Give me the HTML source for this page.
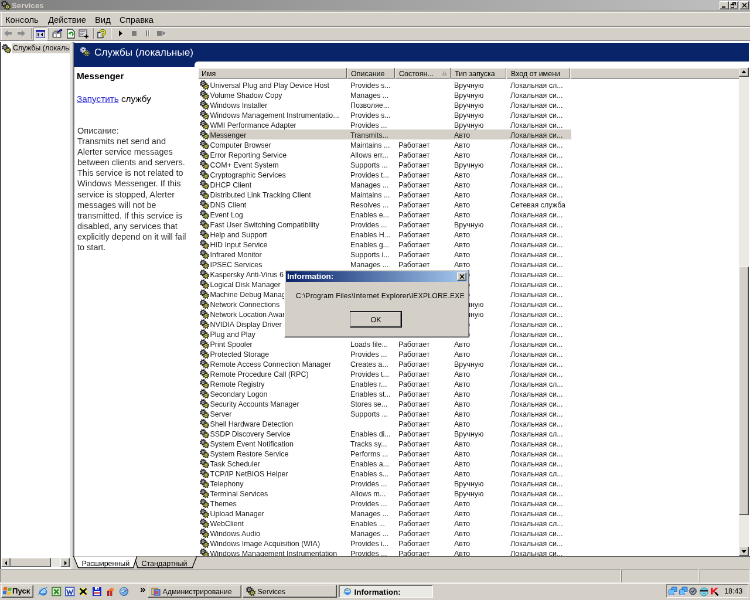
<!DOCTYPE html><html><head><meta charset='utf-8'><style>
*{margin:0;padding:0;box-sizing:border-box}
html,body{width:750px;height:600px;overflow:hidden;background:#d4d0c8}
#root{will-change:transform;position:absolute;left:0;top:0;width:1280px;height:1024px;transform:scale(0.5859375);transform-origin:0 0;background:#d4d0c8;overflow:hidden;font-family:"Liberation Sans",sans-serif;font-size:12.5px;color:#000}
.a{position:absolute}
.t{position:absolute;white-space:nowrap;line-height:17px}
.lt{color:#1a1a1a}
.up{border-style:solid;border-width:1px;border-color:#fff #404040 #404040 #fff;box-shadow:inset -1px -1px 0 #808080, inset 1px 1px 0 #d4d0c8;background:#d4d0c8}
.dn{border-style:solid;border-width:1px;border-color:#808080 #fff #fff #808080;}
.row{position:absolute;left:339px;height:17px;width:936px}
.row span{position:absolute;top:0;white-space:nowrap;line-height:17px}
</style></head><body><div id='root'><svg width="0" height="0" style="position:absolute"><defs>
<g id="gear">
 <circle cx="5.6" cy="5.6" r="4.9" fill="none" stroke="#1a1a1a" stroke-width="1.8" stroke-dasharray="1.9 1.95"/>
 <circle cx="5.6" cy="5.6" r="4.3" fill="#1e1e1e"/>
 <circle cx="5.6" cy="5.6" r="2.7" fill="#b4b4b8"/>
 <circle cx="5.6" cy="5.6" r="1.1" fill="#30304a"/>
 <circle cx="10.6" cy="10.8" r="4.9" fill="none" stroke="#2e2e0c" stroke-width="1.8" stroke-dasharray="1.9 1.95"/>
 <circle cx="10.6" cy="10.8" r="4.3" fill="#2e2e0c"/>
 <circle cx="10.6" cy="10.8" r="2.8" fill="#c4c468"/>
 <circle cx="10.6" cy="10.8" r="1.1" fill="#4a4a18"/>
</g>
</defs></svg><div class="a" style="left:0;top:0;width:1280px;height:17px;background:linear-gradient(90deg,#808080,#c0c0c0)"></div><svg class="a" style="left:2px;top:1px" width="16" height="16"><use href="#gear"/></svg><div class="t" style="left:20px;top:0.5px;line-height:18px;font-weight:bold;font-size:13.3px;color:#d4d0c8">Services</div><div class="a up" style="left:1228px;top:2px;width:16px;height:14px"><div class="a" style="left:3px;top:8px;width:6px;height:2px;background:#000"></div></div><div class="a up" style="left:1244px;top:2px;width:16px;height:14px"><div class="a" style="left:5px;top:1px;width:6px;height:5px;border:1px solid #000;border-top-width:2px"></div><div class="a" style="left:2px;top:4px;width:6px;height:6px;border:1px solid #000;border-top-width:2px;background:#d4d0c8"></div></div><div class="a up" style="left:1262px;top:2px;width:16px;height:14px"><svg class="a" style="left:3px;top:2px" width="9" height="8"><path d="M1 0.5 L8 7.5 M8 0.5 L1 7.5" stroke="#000" stroke-width="1.6"/></svg></div><div class="a" style="left:0;top:17px;width:1280px;height:3px;background:#aaa9a5"></div><div class="a" style="left:0;top:20px;width:1280px;height:2px;background:#f0eee8"></div><div class="a" style="left:0;top:44px;width:1280px;height:2px;background:#8a8a8a"></div><div class="a" style="left:0;top:46px;width:1280px;height:2px;background:#f4f2ee"></div><div class="t" style="left:9px;top:24.5px;font-size:14.8px;line-height:18px">Консоль</div><div class="t" style="left:82px;top:24.5px;font-size:14.8px;line-height:18px">Действие</div><div class="t" style="left:162px;top:24.5px;font-size:14.8px;line-height:18px">Вид</div><div class="t" style="left:204px;top:24.5px;font-size:14.8px;line-height:18px">Справка</div><div class="a" style="left:0;top:68px;width:1280px;height:2px;background:#8a8a8a"></div><div class="a" style="left:0;top:70px;width:1280px;height:2px;background:#fff"></div><div class="a" style="left:0;top:72px;width:1280px;height:1px;background:#404040"></div><div class="a" style="left:0;top:22px;width:1.2px;height:22px;background:#b0b0b0"></div><div class="a" style="left:1.2px;top:22px;width:1.5px;height:22px;background:#f8f8f8"></div><div class="a" style="left:0;top:48px;width:1.2px;height:20px;background:#b0b0b0"></div><div class="a" style="left:1.2px;top:48px;width:1.5px;height:20px;background:#f8f8f8"></div><svg class="a" style="left:6px;top:50px" width="16" height="14"><path d="M1 7 L7 1.5 L7 5 L14 5 L14 9 L7 9 L7 12.5 Z" fill="#8c8c8c"/></svg><svg class="a" style="left:28px;top:50px" width="16" height="14"><path d="M15 7 L9 1.5 L9 5 L2 5 L2 9 L9 9 L9 12.5 Z" fill="#8c8c8c"/></svg><div class="a" style="left:53px;top:48px;width:1px;height:19px;background:#808080"></div><div class="a" style="left:54px;top:48px;width:1px;height:19px;background:#fff"></div><div class="a" style="left:57px;top:47px;width:24px;height:22px;border:1px solid;border-color:#808080 #fff #fff #808080;background:#eceae4"></div><svg class="a" style="left:61px;top:51px" width="16" height="14"><rect x="0.5" y="0.5" width="15" height="13" fill="#d8d8f0" stroke="#2020a0"/><rect x="0.5" y="0.5" width="15" height="3" fill="#2020a0"/><rect x="3" y="5" width="3" height="6" fill="#404040"/><path d="M12 5 L12 11 L8.5 8 Z" fill="#000"/></svg><div class="a" style="left:82px;top:48px;width:1px;height:19px;background:#808080"></div><div class="a" style="left:83px;top:48px;width:1px;height:19px;background:#fff"></div><svg class="a" style="left:89px;top:50px" width="18" height="16"><path d="M1 6 L5 3 L15 3 L15 14 L1 14 Z" fill="#a0a0a0" stroke="#404040"/><rect x="3" y="8" width="3" height="5" fill="#fff"/><rect x="8" y="8" width="5" height="5" fill="#fff"/><path d="M9 6 L14 1 L16 1 L16 3" stroke="#000080" stroke-width="2" fill="none"/></svg><svg class="a" style="left:114px;top:49px" width="15" height="18"><path d="M1 1 L9 1 L13 5 L13 16 L1 16 Z" fill="#f4fff4" stroke="#303030" stroke-width="1.3"/><path d="M4.5 9 A3 3 0 1 1 9 11.5" stroke="#209020" stroke-width="2.2" fill="none"/><path d="M3 7 L6 11 L7 7 Z" fill="#209020"/></svg><svg class="a" style="left:134px;top:50px" width="18" height="16"><rect x="1" y="1" width="13" height="11" fill="#d8d8e0" stroke="#505050" stroke-width="1.3"/><path d="M3 4 L11 4 M3 6.5 L9 6.5 M3 9 L8 9" stroke="#505050" stroke-width="1.2"/><path d="M10 12 L17 12 M13.5 9 L13.5 15.5" stroke="#000" stroke-width="2"/></svg><div class="a" style="left:159px;top:48px;width:1px;height:19px;background:#808080"></div><div class="a" style="left:160px;top:48px;width:1px;height:19px;background:#fff"></div><svg class="a" style="left:165px;top:49px" width="18" height="18"><path d="M2 6.5 L6 6.5 L6 15.5 L2 15.5 Z" fill="#f4f4ff"/><path d="M6.5 6.5 L2 6.5 L2 15.5 L10 15.5" fill="none" stroke="#303038" stroke-width="1.6"/><path d="M6.3 6 A3.8 3.6 0 1 1 11.6 9.6 L10.6 10.6 L10.6 12" stroke="#303010" stroke-width="3.6" fill="none"/><path d="M6.3 6 A3.8 3.6 0 1 1 11.6 9.6 L10.6 10.6 L10.6 12" stroke="#e8f010" stroke-width="2" fill="none"/><rect x="9.2" y="13.2" width="3" height="2.6" fill="#4a6a10"/></svg><div class="a" style="left:189px;top:48px;width:1px;height:19px;background:#808080"></div><div class="a" style="left:190px;top:48px;width:1px;height:19px;background:#fff"></div><svg class="a" style="left:201px;top:51px" width="10" height="12"><path d="M2 1 L8 6 L2 11 Z" fill="#000"/></svg><svg class="a" style="left:224px;top:52px" width="10" height="10"><rect x="1" y="1" width="8" height="8" fill="#7c7c7c"/></svg><svg class="a" style="left:247px;top:51px" width="10" height="12"><rect x="2" y="1" width="2.5" height="10" fill="#7c7c7c"/><rect x="5.5" y="1" width="2.5" height="10" fill="#7c7c7c"/><path d="M4.5 1 L4.5 11 M8 1 L8 11" stroke="#fff" stroke-width="1"/></svg><svg class="a" style="left:267px;top:51px" width="18" height="12"><rect x="1" y="2" width="8" height="8" fill="#7c7c7c"/><path d="M10.5 2 L16 6 L10.5 10 Z" fill="#7c7c7c"/><path d="M11 10.5 L16.5 6.5" stroke="#fff" stroke-width="1"/></svg><div class="a" style="left:0;top:72px;width:121px;height:898px;background:#fff;border-left:2px solid #505050"></div><svg class="a" style="left:3px;top:75px" width="16" height="16"><use href="#gear"/></svg><div class="a" style="left:20px;top:74px;width:99px;height:17px;background:#d4d0c8"></div><div class="t" style="left:22px;top:74px;width:97px;overflow:hidden">Службы (локальные)</div><div class="a" style="left:2px;top:952px;width:117px;height:16px;background:#e6e4df"></div><div class="a up" style="left:2px;top:952px;width:16px;height:16px"><svg class="a" style="left:4px;top:4px" width="6" height="8"><path d="M5 0 L5 8 L1 4 Z" fill="#000"/></svg></div><div class="a up" style="left:18px;top:952px;width:69px;height:16px"></div><div class="a up" style="left:103px;top:952px;width:16px;height:16px"><svg class="a" style="left:5px;top:4px" width="6" height="8"><path d="M1 0 L1 8 L5 4 Z" fill="#000"/></svg></div><div class="a" style="left:119px;top:72px;width:5px;height:898px;background:#e2e0dc"></div><div class="a" style="left:124px;top:72px;width:3px;height:898px;background:#7a7a7a"></div><div class="a" style="left:127px;top:72px;width:1153px;height:878px;background:#fff"></div><div class="a" style="left:126px;top:73px;width:1152px;height:41px;background:#0a246a"></div><div class="a" style="left:332px;top:105px;width:946px;height:12px;background:#fff;border-top-left-radius:6px"></div><svg class="a" style="left:136px;top:79px" width="18" height="18"><circle cx="6" cy="6" r="4.4" fill="none" stroke="#e8e8f4" stroke-width="1.8" stroke-dasharray="1.7 1.75"/><circle cx="6" cy="6" r="3.6" fill="#dcdcec"/><circle cx="6" cy="6" r="1.3" fill="#1a2a6a"/><circle cx="11.5" cy="11.5" r="4.4" fill="none" stroke="#c8c850" stroke-width="1.8" stroke-dasharray="1.7 1.75"/><circle cx="11.5" cy="11.5" r="3.6" fill="#2a2a10"/><circle cx="11.5" cy="11.5" r="2.4" fill="#d0d060"/><circle cx="11.5" cy="11.5" r="1" fill="#2a2a10"/></svg><div class="t" style="left:161px;top:76px;font-size:17.2px;line-height:26px;color:#fff">Службы (локальные)</div><div class="t" style="left:131px;top:120px;font-size:15.4px;font-weight:bold;line-height:20px">Messenger</div><div class="t" style="left:131px;top:158.5px;font-size:15.3px;line-height:20px"><span style="color:#2020d0;text-decoration:underline">Запустить</span> службу</div><div class="a" style="left:132px;top:214px;font-size:14.5px;line-height:18.1px;color:#2c2c2c"><div style="white-space:nowrap;height:18.1px">Описание:</div><div style="white-space:nowrap;height:18.1px">Transmits net send and</div><div style="white-space:nowrap;height:18.1px">Alerter service messages</div><div style="white-space:nowrap;height:18.1px">between clients and servers.</div><div style="white-space:nowrap;height:18.1px">This service is not related to</div><div style="white-space:nowrap;height:18.1px">Windows Messenger. If this</div><div style="white-space:nowrap;height:18.1px">service is stopped, Alerter</div><div style="white-space:nowrap;height:18.1px">messages will not be</div><div style="white-space:nowrap;height:18.1px">transmitted. If this service is</div><div style="white-space:nowrap;height:18.1px">disabled, any services that</div><div style="white-space:nowrap;height:18.1px">explicitly depend on it will fail</div><div style="white-space:nowrap;height:18.1px">to start.</div></div><div class="a" style="left:339px;top:116px;width:922px;height:18px;background:#d4d0c8;border-bottom:1.7px solid #404040;box-shadow:inset 0 1px 0 #fff"></div><div class="a" style="left:590.5px;top:116px;width:1.6px;height:18px;background:#5a5a5a"></div><div class="a" style="left:592.1px;top:116px;width:1px;height:18px;background:#f4f4f4"></div><div class="a" style="left:672.5px;top:116px;width:1.6px;height:18px;background:#5a5a5a"></div><div class="a" style="left:674.1px;top:116px;width:1px;height:18px;background:#f4f4f4"></div><div class="a" style="left:767.5px;top:116px;width:1.6px;height:18px;background:#5a5a5a"></div><div class="a" style="left:769.1px;top:116px;width:1px;height:18px;background:#f4f4f4"></div><div class="a" style="left:862.5px;top:116px;width:1.6px;height:18px;background:#5a5a5a"></div><div class="a" style="left:864.1px;top:116px;width:1px;height:18px;background:#f4f4f4"></div><div class="a" style="left:971.5px;top:116px;width:1.6px;height:18px;background:#5a5a5a"></div><div class="a" style="left:973.1px;top:116px;width:1px;height:18px;background:#f4f4f4"></div><div class="t" style="left:344px;top:117.7px;line-height:17px">Имя</div><div class="t" style="left:599px;top:117.7px;line-height:17px">Описание</div><div class="t" style="left:681px;top:117.7px;line-height:17px">Состоян...</div><div class="t" style="left:776px;top:117.7px;line-height:17px">Тип запуска</div><div class="t" style="left:872px;top:117.7px;line-height:17px">Вход от имени</div><svg class="a" style="left:754px;top:121px" width="9" height="8"><path d="M4.5 1 L8 7 L1 7 Z" fill="none" stroke="#808080" stroke-width="1"/></svg><svg class="a" style="left:341px;top:137px" width="16" height="16"><use href="#gear"/></svg><div class="t lt" style="left:358.5px;top:138px">Universal Plug and Play Device Host</div><div class="t lt" style="left:598px;top:138px">Provides s...</div><div class="t lt" style="left:775px;top:138px">Вручную</div><div class="t lt" style="left:871px;top:138px">Локальная сл...</div><svg class="a" style="left:341px;top:154px" width="16" height="16"><use href="#gear"/></svg><div class="t lt" style="left:358.5px;top:155px">Volume Shadow Copy</div><div class="t lt" style="left:598px;top:155px">Manages ...</div><div class="t lt" style="left:775px;top:155px">Вручную</div><div class="t lt" style="left:871px;top:155px">Локальная си...</div><svg class="a" style="left:341px;top:171px" width="16" height="16"><use href="#gear"/></svg><div class="t lt" style="left:358.5px;top:172px">Windows Installer</div><div class="t lt" style="left:598px;top:172px">Позволяе...</div><div class="t lt" style="left:775px;top:172px">Вручную</div><div class="t lt" style="left:871px;top:172px">Локальная си...</div><svg class="a" style="left:341px;top:188px" width="16" height="16"><use href="#gear"/></svg><div class="t lt" style="left:358.5px;top:189px">Windows Management Instrumentatio...</div><div class="t lt" style="left:598px;top:189px">Provides s...</div><div class="t lt" style="left:775px;top:189px">Вручную</div><div class="t lt" style="left:871px;top:189px">Локальная си...</div><svg class="a" style="left:341px;top:205px" width="16" height="16"><use href="#gear"/></svg><div class="t lt" style="left:358.5px;top:206px">WMI Performance Adapter</div><div class="t lt" style="left:598px;top:206px">Provides ...</div><div class="t lt" style="left:775px;top:206px">Вручную</div><div class="t lt" style="left:871px;top:206px">Локальная си...</div><svg class="a" style="left:341px;top:222px" width="16" height="16"><use href="#gear"/></svg><div class="a" style="left:357px;top:221px;width:618px;height:17px;background:#d4d0c8"></div><div class="t lt" style="left:358.5px;top:223px">Messenger</div><div class="t lt" style="left:598px;top:223px">Transmits...</div><div class="t lt" style="left:775px;top:223px">Авто</div><div class="t lt" style="left:871px;top:223px">Локальная си...</div><svg class="a" style="left:341px;top:239px" width="16" height="16"><use href="#gear"/></svg><div class="t lt" style="left:358.5px;top:240px">Computer Browser</div><div class="t lt" style="left:598px;top:240px">Maintains ...</div><div class="t lt" style="left:680px;top:240px">Работает</div><div class="t lt" style="left:775px;top:240px">Авто</div><div class="t lt" style="left:871px;top:240px">Локальная си...</div><svg class="a" style="left:341px;top:256px" width="16" height="16"><use href="#gear"/></svg><div class="t lt" style="left:358.5px;top:257px">Error Reporting Service</div><div class="t lt" style="left:598px;top:257px">Allows err...</div><div class="t lt" style="left:680px;top:257px">Работает</div><div class="t lt" style="left:775px;top:257px">Авто</div><div class="t lt" style="left:871px;top:257px">Локальная си...</div><svg class="a" style="left:341px;top:273px" width="16" height="16"><use href="#gear"/></svg><div class="t lt" style="left:358.5px;top:274px">COM+ Event System</div><div class="t lt" style="left:598px;top:274px">Supports ...</div><div class="t lt" style="left:680px;top:274px">Работает</div><div class="t lt" style="left:775px;top:274px">Вручную</div><div class="t lt" style="left:871px;top:274px">Локальная си...</div><svg class="a" style="left:341px;top:290px" width="16" height="16"><use href="#gear"/></svg><div class="t lt" style="left:358.5px;top:291px">Cryptographic Services</div><div class="t lt" style="left:598px;top:291px">Provides t...</div><div class="t lt" style="left:680px;top:291px">Работает</div><div class="t lt" style="left:775px;top:291px">Авто</div><div class="t lt" style="left:871px;top:291px">Локальная си...</div><svg class="a" style="left:341px;top:307px" width="16" height="16"><use href="#gear"/></svg><div class="t lt" style="left:358.5px;top:308px">DHCP Client</div><div class="t lt" style="left:598px;top:308px">Manages ...</div><div class="t lt" style="left:680px;top:308px">Работает</div><div class="t lt" style="left:775px;top:308px">Авто</div><div class="t lt" style="left:871px;top:308px">Локальная си...</div><svg class="a" style="left:341px;top:324px" width="16" height="16"><use href="#gear"/></svg><div class="t lt" style="left:358.5px;top:325px">Distributed Link Tracking Client</div><div class="t lt" style="left:598px;top:325px">Maintains ...</div><div class="t lt" style="left:680px;top:325px">Работает</div><div class="t lt" style="left:775px;top:325px">Авто</div><div class="t lt" style="left:871px;top:325px">Локальная си...</div><svg class="a" style="left:341px;top:341px" width="16" height="16"><use href="#gear"/></svg><div class="t lt" style="left:358.5px;top:342px">DNS Client</div><div class="t lt" style="left:598px;top:342px">Resolves ...</div><div class="t lt" style="left:680px;top:342px">Работает</div><div class="t lt" style="left:775px;top:342px">Авто</div><div class="t lt" style="left:871px;top:342px">Сетевая служба</div><svg class="a" style="left:341px;top:358px" width="16" height="16"><use href="#gear"/></svg><div class="t lt" style="left:358.5px;top:359px">Event Log</div><div class="t lt" style="left:598px;top:359px">Enables e...</div><div class="t lt" style="left:680px;top:359px">Работает</div><div class="t lt" style="left:775px;top:359px">Авто</div><div class="t lt" style="left:871px;top:359px">Локальная си...</div><svg class="a" style="left:341px;top:375px" width="16" height="16"><use href="#gear"/></svg><div class="t lt" style="left:358.5px;top:376px">Fast User Switching Compatibility</div><div class="t lt" style="left:598px;top:376px">Provides ...</div><div class="t lt" style="left:680px;top:376px">Работает</div><div class="t lt" style="left:775px;top:376px">Вручную</div><div class="t lt" style="left:871px;top:376px">Локальная си...</div><svg class="a" style="left:341px;top:392px" width="16" height="16"><use href="#gear"/></svg><div class="t lt" style="left:358.5px;top:393px">Help and Support</div><div class="t lt" style="left:598px;top:393px">Enables H...</div><div class="t lt" style="left:680px;top:393px">Работает</div><div class="t lt" style="left:775px;top:393px">Авто</div><div class="t lt" style="left:871px;top:393px">Локальная си...</div><svg class="a" style="left:341px;top:409px" width="16" height="16"><use href="#gear"/></svg><div class="t lt" style="left:358.5px;top:410px">HID Input Service</div><div class="t lt" style="left:598px;top:410px">Enables g...</div><div class="t lt" style="left:680px;top:410px">Работает</div><div class="t lt" style="left:775px;top:410px">Авто</div><div class="t lt" style="left:871px;top:410px">Локальная си...</div><svg class="a" style="left:341px;top:426px" width="16" height="16"><use href="#gear"/></svg><div class="t lt" style="left:358.5px;top:427px">Infrared Monitor</div><div class="t lt" style="left:598px;top:427px">Supports i...</div><div class="t lt" style="left:680px;top:427px">Работает</div><div class="t lt" style="left:775px;top:427px">Авто</div><div class="t lt" style="left:871px;top:427px">Локальная си...</div><svg class="a" style="left:341px;top:443px" width="16" height="16"><use href="#gear"/></svg><div class="t lt" style="left:358.5px;top:444px">IPSEC Services</div><div class="t lt" style="left:598px;top:444px">Manages ...</div><div class="t lt" style="left:680px;top:444px">Работает</div><div class="t lt" style="left:775px;top:444px">Авто</div><div class="t lt" style="left:871px;top:444px">Локальная си...</div><svg class="a" style="left:341px;top:460px" width="16" height="16"><use href="#gear"/></svg><div class="t lt" style="left:358.5px;top:461px">Kaspersky Anti-Virus 6.0</div><div class="t lt" style="left:598px;top:461px">Provides ...</div><div class="t lt" style="left:680px;top:461px">Работает</div><div class="t lt" style="left:775px;top:461px">Авто</div><div class="t lt" style="left:871px;top:461px">Локальная си...</div><svg class="a" style="left:341px;top:477px" width="16" height="16"><use href="#gear"/></svg><div class="t lt" style="left:358.5px;top:478px">Logical Disk Manager</div><div class="t lt" style="left:598px;top:478px">Detects a...</div><div class="t lt" style="left:680px;top:478px">Работает</div><div class="t lt" style="left:775px;top:478px">Авто</div><div class="t lt" style="left:871px;top:478px">Локальная си...</div><svg class="a" style="left:341px;top:494px" width="16" height="16"><use href="#gear"/></svg><div class="t lt" style="left:358.5px;top:495px">Machine Debug Manager</div><div class="t lt" style="left:598px;top:495px">Supports l...</div><div class="t lt" style="left:680px;top:495px">Работает</div><div class="t lt" style="left:775px;top:495px">Авто</div><div class="t lt" style="left:871px;top:495px">Локальная си...</div><svg class="a" style="left:341px;top:511px" width="16" height="16"><use href="#gear"/></svg><div class="t lt" style="left:358.5px;top:512px">Network Connections</div><div class="t lt" style="left:598px;top:512px">Manages o...</div><div class="t lt" style="left:680px;top:512px">Работает</div><div class="t lt" style="left:775px;top:512px">Вручную</div><div class="t lt" style="left:871px;top:512px">Локальная си...</div><svg class="a" style="left:341px;top:528px" width="16" height="16"><use href="#gear"/></svg><div class="t lt" style="left:358.5px;top:529px">Network Location Awareness (NLA)</div><div class="t lt" style="left:598px;top:529px">Collects a...</div><div class="t lt" style="left:680px;top:529px">Работает</div><div class="t lt" style="left:775px;top:529px">Вручную</div><div class="t lt" style="left:871px;top:529px">Локальная си...</div><svg class="a" style="left:341px;top:545px" width="16" height="16"><use href="#gear"/></svg><div class="t lt" style="left:358.5px;top:546px">NVIDIA Display Driver Service</div><div class="t lt" style="left:598px;top:546px">Provides ...</div><div class="t lt" style="left:680px;top:546px">Работает</div><div class="t lt" style="left:775px;top:546px">Авто</div><div class="t lt" style="left:871px;top:546px">Локальная си...</div><svg class="a" style="left:341px;top:562px" width="16" height="16"><use href="#gear"/></svg><div class="t lt" style="left:358.5px;top:563px">Plug and Play</div><div class="t lt" style="left:598px;top:563px">Enables a ...</div><div class="t lt" style="left:680px;top:563px">Работает</div><div class="t lt" style="left:775px;top:563px">Авто</div><div class="t lt" style="left:871px;top:563px">Локальная си...</div><svg class="a" style="left:341px;top:579px" width="16" height="16"><use href="#gear"/></svg><div class="t lt" style="left:358.5px;top:580px">Print Spooler</div><div class="t lt" style="left:598px;top:580px">Loads file...</div><div class="t lt" style="left:680px;top:580px">Работает</div><div class="t lt" style="left:775px;top:580px">Авто</div><div class="t lt" style="left:871px;top:580px">Локальная си...</div><svg class="a" style="left:341px;top:596px" width="16" height="16"><use href="#gear"/></svg><div class="t lt" style="left:358.5px;top:597px">Protected Storage</div><div class="t lt" style="left:598px;top:597px">Provides ...</div><div class="t lt" style="left:680px;top:597px">Работает</div><div class="t lt" style="left:775px;top:597px">Авто</div><div class="t lt" style="left:871px;top:597px">Локальная си...</div><svg class="a" style="left:341px;top:613px" width="16" height="16"><use href="#gear"/></svg><div class="t lt" style="left:358.5px;top:614px">Remote Access Connection Manager</div><div class="t lt" style="left:598px;top:614px">Creates a...</div><div class="t lt" style="left:680px;top:614px">Работает</div><div class="t lt" style="left:775px;top:614px">Вручную</div><div class="t lt" style="left:871px;top:614px">Локальная си...</div><svg class="a" style="left:341px;top:630px" width="16" height="16"><use href="#gear"/></svg><div class="t lt" style="left:358.5px;top:631px">Remote Procedure Call (RPC)</div><div class="t lt" style="left:598px;top:631px">Provides t...</div><div class="t lt" style="left:680px;top:631px">Работает</div><div class="t lt" style="left:775px;top:631px">Авто</div><div class="t lt" style="left:871px;top:631px">Локальная си...</div><svg class="a" style="left:341px;top:647px" width="16" height="16"><use href="#gear"/></svg><div class="t lt" style="left:358.5px;top:648px">Remote Registry</div><div class="t lt" style="left:598px;top:648px">Enables r...</div><div class="t lt" style="left:680px;top:648px">Работает</div><div class="t lt" style="left:775px;top:648px">Авто</div><div class="t lt" style="left:871px;top:648px">Локальная сл...</div><svg class="a" style="left:341px;top:664px" width="16" height="16"><use href="#gear"/></svg><div class="t lt" style="left:358.5px;top:665px">Secondary Logon</div><div class="t lt" style="left:598px;top:665px">Enables st...</div><div class="t lt" style="left:680px;top:665px">Работает</div><div class="t lt" style="left:775px;top:665px">Авто</div><div class="t lt" style="left:871px;top:665px">Локальная си...</div><svg class="a" style="left:341px;top:681px" width="16" height="16"><use href="#gear"/></svg><div class="t lt" style="left:358.5px;top:682px">Security Accounts Manager</div><div class="t lt" style="left:598px;top:682px">Stores se...</div><div class="t lt" style="left:680px;top:682px">Работает</div><div class="t lt" style="left:775px;top:682px">Авто</div><div class="t lt" style="left:871px;top:682px">Локальная си...</div><svg class="a" style="left:341px;top:698px" width="16" height="16"><use href="#gear"/></svg><div class="t lt" style="left:358.5px;top:699px">Server</div><div class="t lt" style="left:598px;top:699px">Supports ...</div><div class="t lt" style="left:680px;top:699px">Работает</div><div class="t lt" style="left:775px;top:699px">Авто</div><div class="t lt" style="left:871px;top:699px">Локальная си...</div><svg class="a" style="left:341px;top:715px" width="16" height="16"><use href="#gear"/></svg><div class="t lt" style="left:358.5px;top:716px">Shell Hardware Detection</div><div class="t lt" style="left:680px;top:716px">Работает</div><div class="t lt" style="left:775px;top:716px">Авто</div><div class="t lt" style="left:871px;top:716px">Локальная си...</div><svg class="a" style="left:341px;top:732px" width="16" height="16"><use href="#gear"/></svg><div class="t lt" style="left:358.5px;top:733px">SSDP Discovery Service</div><div class="t lt" style="left:598px;top:733px">Enables di...</div><div class="t lt" style="left:680px;top:733px">Работает</div><div class="t lt" style="left:775px;top:733px">Вручную</div><div class="t lt" style="left:871px;top:733px">Локальная сл...</div><svg class="a" style="left:341px;top:749px" width="16" height="16"><use href="#gear"/></svg><div class="t lt" style="left:358.5px;top:750px">System Event Notification</div><div class="t lt" style="left:598px;top:750px">Tracks sy...</div><div class="t lt" style="left:680px;top:750px">Работает</div><div class="t lt" style="left:775px;top:750px">Авто</div><div class="t lt" style="left:871px;top:750px">Локальная си...</div><svg class="a" style="left:341px;top:766px" width="16" height="16"><use href="#gear"/></svg><div class="t lt" style="left:358.5px;top:767px">System Restore Service</div><div class="t lt" style="left:598px;top:767px">Performs ...</div><div class="t lt" style="left:680px;top:767px">Работает</div><div class="t lt" style="left:775px;top:767px">Авто</div><div class="t lt" style="left:871px;top:767px">Локальная си...</div><svg class="a" style="left:341px;top:783px" width="16" height="16"><use href="#gear"/></svg><div class="t lt" style="left:358.5px;top:784px">Task Scheduler</div><div class="t lt" style="left:598px;top:784px">Enables a...</div><div class="t lt" style="left:680px;top:784px">Работает</div><div class="t lt" style="left:775px;top:784px">Авто</div><div class="t lt" style="left:871px;top:784px">Локальная си...</div><svg class="a" style="left:341px;top:800px" width="16" height="16"><use href="#gear"/></svg><div class="t lt" style="left:358.5px;top:801px">TCP/IP NetBIOS Helper</div><div class="t lt" style="left:598px;top:801px">Enables s...</div><div class="t lt" style="left:680px;top:801px">Работает</div><div class="t lt" style="left:775px;top:801px">Авто</div><div class="t lt" style="left:871px;top:801px">Локальная сл...</div><svg class="a" style="left:341px;top:817px" width="16" height="16"><use href="#gear"/></svg><div class="t lt" style="left:358.5px;top:818px">Telephony</div><div class="t lt" style="left:598px;top:818px">Provides ...</div><div class="t lt" style="left:680px;top:818px">Работает</div><div class="t lt" style="left:775px;top:818px">Вручную</div><div class="t lt" style="left:871px;top:818px">Локальная си...</div><svg class="a" style="left:341px;top:834px" width="16" height="16"><use href="#gear"/></svg><div class="t lt" style="left:358.5px;top:835px">Terminal Services</div><div class="t lt" style="left:598px;top:835px">Allows m...</div><div class="t lt" style="left:680px;top:835px">Работает</div><div class="t lt" style="left:775px;top:835px">Вручную</div><div class="t lt" style="left:871px;top:835px">Локальная си...</div><svg class="a" style="left:341px;top:851px" width="16" height="16"><use href="#gear"/></svg><div class="t lt" style="left:358.5px;top:852px">Themes</div><div class="t lt" style="left:598px;top:852px">Provides ...</div><div class="t lt" style="left:680px;top:852px">Работает</div><div class="t lt" style="left:775px;top:852px">Авто</div><div class="t lt" style="left:871px;top:852px">Локальная си...</div><svg class="a" style="left:341px;top:868px" width="16" height="16"><use href="#gear"/></svg><div class="t lt" style="left:358.5px;top:869px">Upload Manager</div><div class="t lt" style="left:598px;top:869px">Manages ...</div><div class="t lt" style="left:680px;top:869px">Работает</div><div class="t lt" style="left:775px;top:869px">Авто</div><div class="t lt" style="left:871px;top:869px">Локальная си...</div><svg class="a" style="left:341px;top:885px" width="16" height="16"><use href="#gear"/></svg><div class="t lt" style="left:358.5px;top:886px">WebClient</div><div class="t lt" style="left:598px;top:886px">Enables ...</div><div class="t lt" style="left:680px;top:886px">Работает</div><div class="t lt" style="left:775px;top:886px">Авто</div><div class="t lt" style="left:871px;top:886px">Локальная сл...</div><svg class="a" style="left:341px;top:902px" width="16" height="16"><use href="#gear"/></svg><div class="t lt" style="left:358.5px;top:903px">Windows Audio</div><div class="t lt" style="left:598px;top:903px">Manages ...</div><div class="t lt" style="left:680px;top:903px">Работает</div><div class="t lt" style="left:775px;top:903px">Авто</div><div class="t lt" style="left:871px;top:903px">Локальная си...</div><svg class="a" style="left:341px;top:919px" width="16" height="16"><use href="#gear"/></svg><div class="t lt" style="left:358.5px;top:920px">Windows Image Acquisition (WIA)</div><div class="t lt" style="left:598px;top:920px">Provides i...</div><div class="t lt" style="left:680px;top:920px">Работает</div><div class="t lt" style="left:775px;top:920px">Авто</div><div class="t lt" style="left:871px;top:920px">Локальная си...</div><svg class="a" style="left:341px;top:936px" width="16" height="16"><use href="#gear"/></svg><div class="t lt" style="left:358.5px;top:937px">Windows Management Instrumentation</div><div class="t lt" style="left:598px;top:937px">Provides ...</div><div class="t lt" style="left:680px;top:937px">Работает</div><div class="t lt" style="left:775px;top:937px">Авто</div><div class="t lt" style="left:871px;top:937px">Локальная си...</div><div class="a" style="left:1261px;top:116px;width:17px;height:834px;background:#ebe9e4"></div><div class="a up" style="left:1261px;top:115px;width:17px;height:16px"><svg class="a" style="left:3px;top:4px" width="9" height="6"><path d="M4.5 0 L8.5 5 L0.5 5 Z" fill="#000"/></svg></div><div class="a up" style="left:1261px;top:455px;width:17px;height:424px"></div><div class="a up" style="left:1261px;top:933px;width:17px;height:16px"><svg class="a" style="left:3px;top:5px" width="9" height="6"><path d="M0.5 0 L8.5 0 L4.5 5 Z" fill="#000"/></svg></div><div class="a" style="left:124px;top:949px;width:1156px;height:1px;background:#404040"></div><div class="a" style="left:124px;top:950px;width:1156px;height:22px;background:#d4d0c8"></div><svg class="a" style="left:124px;top:949px" width="220" height="24"><path d="M105 0.5 L111 20 L204.2 20 L211.7 0.5" fill="#d4d0c8" stroke="#000" stroke-width="1.3"/><path d="M1.4 0 L9.6 20 L103.3 20 L109.8 0 Z" fill="#fff"/><path d="M1.4 0 L9.6 20 L103.3 20 L109.8 0" fill="none" stroke="#000" stroke-width="1.3"/><path d="M2 0.5 L109 0.5" stroke="#b8b8b8" stroke-width="1"/></svg><div class="t" style="left:139.5px;top:952.5px;line-height:19px">Расширенный</div><div class="t" style="left:241.5px;top:952.5px;line-height:19px">Стандартный</div><div class="a" style="left:0;top:969px;width:121px;height:2px;background:#fff"></div><div class="a" style="left:0;top:72px;width:2px;height:899px;background:#505050"></div><div class="a dn" style="left:0px;top:972px;width:1059px;height:22px"></div><div class="a dn" style="left:1060px;top:972px;width:132px;height:22px"></div><div class="a dn" style="left:1194px;top:972px;width:85px;height:22px"></div><div class="a" style="left:0;top:994px;width:1280px;height:30px;background:#d4d0c8;box-shadow:inset 0 1px 0 #d4d0c8, inset 0 2px 0 #fff"></div><div class="a up" style="left:2px;top:998px;width:55px;height:22px"></div><svg class="a" style="left:5px;top:1001px" width="16" height="15"><path d="M1 2 Q4 0 7.3 1.5 L6.5 7 Q3.5 5.5 0.5 7 Z" fill="#f06020"/><path d="M8.5 1.8 Q11.5 3 15 1.5 L14.2 7 Q11 8.5 7.8 7.2 Z" fill="#60b030"/><path d="M0.3 8 Q3.3 6.8 6.3 8.2 L5.5 13.8 Q2.5 12.3 -0.5 13.8 Z" fill="#3070e0"/><path d="M7.6 8.3 Q10.8 9.6 14 8.2 L13.2 13.8 Q10 15.2 6.8 13.9 Z" fill="#f0c020"/></svg><div class="t" style="left:21px;top:998px;line-height:22px;font-size:13.2px;font-weight:bold">Пуск</div><svg class="a" style="left:65px;top:1001px" width="17" height="17"><defs><radialGradient id="ieg" cx="0.35" cy="0.3" r="0.8"><stop offset="0" stop-color="#a8e0ff"/><stop offset="1" stop-color="#1060c8"/></radialGradient></defs><ellipse cx="8.5" cy="9" rx="6.8" ry="6.5" fill="url(#ieg)"/><path d="M4.5 9.5 L12.8 9.5 M5 7 A4 3.4 0 0 1 12.3 7.5" stroke="#e8f6ff" stroke-width="1.8" fill="none"/><path d="M1 14 Q5 3 15.5 2" stroke="#2070d0" stroke-width="1.4" fill="none"/></svg><svg class="a" style="left:88px;top:1001px" width="17" height="17"><rect x="1" y="1.5" width="14.5" height="14" fill="#b8e8a8" stroke="#4a7a40" stroke-width="1.6"/><rect x="3" y="3.5" width="10.5" height="10" fill="#d8f8c8"/><path d="M4.5 5 L12 12.5 M12 5 L4.5 12.5" stroke="#2a7a2a" stroke-width="2.6"/></svg><svg class="a" style="left:111px;top:1001px" width="17" height="17"><rect x="1" y="1.5" width="14.5" height="14" fill="#f8f8ff" stroke="#3858c0" stroke-width="1.8"/><path d="M3 5 L5.5 13 L8 7.5 L10.5 13 L13.5 5" stroke="#2848a8" stroke-width="2" fill="none"/></svg><svg class="a" style="left:134px;top:1001px" width="17" height="17"><ellipse cx="8" cy="8.5" rx="6.8" ry="6.5" fill="#e8f060"/><path d="M2.5 3.5 L13.5 13.5 M13.5 3.5 L2.5 13.5" stroke="#101010" stroke-width="3"/><ellipse cx="8" cy="8.5" rx="3" ry="2.6" fill="#101010"/></svg><svg class="a" style="left:157px;top:1001px" width="17" height="17"><rect x="1" y="1" width="15" height="15" fill="#1428c8"/><rect x="3.5" y="8" width="10" height="6.5" fill="#fff"/><rect x="3.5" y="10" width="10" height="2.2" fill="#d02020"/><rect x="5" y="1" width="7" height="4.5" fill="#fff"/><rect x="9" y="2" width="2" height="3" fill="#1428c8"/></svg><svg class="a" style="left:180px;top:1001px" width="17" height="17"><path d="M2 8 L10 2 L15 3 L15 7 L9 9 Z" fill="#f07830"/><rect x="3" y="8" width="3.5" height="8" fill="#a02020"/><rect x="8" y="8" width="3.5" height="8" fill="#c03030"/><path d="M12 6 L15 2" stroke="#f0b060" stroke-width="2"/></svg><svg class="a" style="left:203px;top:1001px" width="17" height="17"><defs><radialGradient id="glg" cx="0.35" cy="0.35" r="0.8"><stop offset="0" stop-color="#e0f4ff"/><stop offset="1" stop-color="#3880c8"/></radialGradient></defs><circle cx="8.5" cy="8.5" r="7" fill="url(#glg)" stroke="#3070b0" stroke-width="1.2"/><path d="M4 7 Q8 4 12 7 Q9 10 5 11" stroke="#2060a0" stroke-width="1.2" fill="none"/><path d="M14 5 L16 7" stroke="#e02020" stroke-width="1.5"/></svg><div class="t" style="left:239px;top:995px;line-height:22px;font-size:17px;font-weight:bold;letter-spacing:-1px">»</div><div class="a up" style="left:252px;top:998px;width:160px;height:22px"></div><svg class="a" style="left:258px;top:1001px" width="16" height="16"><rect x="1" y="3" width="10" height="11" fill="#e0d080" stroke="#806020"/><rect x="5" y="5" width="10" height="10" fill="#7090e0" stroke="#304090"/><rect x="7" y="8" width="4" height="5" fill="#e04040"/></svg><div class="t" style="left:277.5px;top:999px;line-height:22px;font-size:12.4px;">Администрирование</div><div class="a up" style="left:414px;top:998px;width:161px;height:22px"></div><svg class="a" style="left:420px;top:1001px" width="16" height="16"><use href="#gear"/></svg><div class="t" style="left:439.5px;top:999px;line-height:22px;font-size:12.4px;">Services</div><div class="a" style="left:578px;top:998px;width:161px;height:22px;border:1px solid;border-color:#404040 #fff #fff #404040;box-shadow:inset 1px 1px 0 #808080;background:#ebe9e4"></div><svg class="a" style="left:585px;top:1001px" width="16" height="16"><circle cx="8" cy="8.5" r="6" fill="#3a8ee6"/><path d="M4 9 L12 9 M5 6.5 A4 3 0 0 1 11.5 7" stroke="#fff" stroke-width="1.6" fill="none"/><path d="M1 11 Q8 2 15 3" stroke="#e0c040" stroke-width="1" fill="none"/></svg><div class="t" style="left:604.5px;top:1000.4px;line-height:22px;font-size:12.4px;font-weight:bold;font-size:13.6px">Information:</div><div class="a" style="left:1137px;top:997px;width:140px;height:23px;border:1px solid;border-color:#808080 #fff #fff #808080"></div><svg class="a" style="left:1140px;top:1001px" width="16" height="17"><rect x="6" y="1" width="9" height="8" rx="1" fill="#50a8f0" stroke="#2860b0"/><rect x="1.5" y="5.5" width="9" height="8" rx="1" fill="#68c0ff" stroke="#2860b0"/><rect x="3" y="13.5" width="6" height="2.5" fill="#d8d8f0"/><rect x="10" y="9" width="5" height="2" fill="#d8d8f0"/></svg><svg class="a" style="left:1158px;top:1001px" width="16" height="17"><rect x="6" y="1" width="9" height="8" rx="1" fill="#50a8f0" stroke="#2860b0"/><rect x="1.5" y="5.5" width="9" height="8" rx="1" fill="#68c0ff" stroke="#2860b0"/><rect x="3" y="13.5" width="6" height="2.5" fill="#d8d8f0"/><rect x="10" y="9" width="5" height="2" fill="#d8d8f0"/></svg><svg class="a" style="left:1176px;top:1002px" width="14" height="14"><circle cx="6.5" cy="7" r="5.5" fill="#a0a8b8" stroke="#505868" stroke-width="2"/><path d="M4 7 L6 9 L9.5 4.5" stroke="#303040" stroke-width="1.4" fill="none"/></svg><svg class="a" style="left:1193px;top:1001px" width="17" height="17"><circle cx="8.5" cy="9" r="7" fill="#60c8e0" stroke="#3090b0"/><path d="M2 9 L15 9" stroke="#fff" stroke-width="1.2"/><rect x="2" y="6" width="13" height="2.6" fill="#202830"/><path d="M4 12 Q8.5 15 13 12" stroke="#fff" stroke-width="1"/></svg><svg class="a" style="left:1212px;top:1002px" width="16" height="15"><path d="M1 1 L4.5 1 L4.5 6 L10 1 L14 1 L7.5 7 L9.5 9.5 L6.5 9.5 L4.5 8 L4.5 12.5 L1 12.5 Z" fill="#f01020"/><path d="M8.5 9 L13.5 14" stroke="#000" stroke-width="2.6"/></svg><div class="t" style="left:1236px;top:998px;line-height:22px;font-size:12.5px">18:43</div><div class="a up" style="left:485px;top:460px;width:316px;height:116px"></div><div class="a" style="left:488px;top:463px;width:310px;height:18px;background:linear-gradient(90deg,#0a246a,#a6caf0)"></div><div class="t" style="left:490px;top:463px;line-height:18px;font-weight:bold;font-size:13.6px;color:#fff">Information:</div><div class="a up" style="left:780px;top:465px;width:16px;height:14px"><svg class="a" style="left:3px;top:2px" width="9" height="8"><path d="M1 0.5 L8 7.5 M8 0.5 L1 7.5" stroke="#000" stroke-width="1.6"/></svg></div><div class="t" style="left:505px;top:497px;font-size:12.1px;letter-spacing:0.28px">C:\Program Files\Internet Explorer\IEXPLORE.EXE</div><div class="a" style="left:597px;top:531px;width:89px;height:28px;border:1px solid #000"><div class="a up" style="left:0;top:0;width:87px;height:26px"></div></div><div class="t" style="left:597px;top:537.7px;width:89px;text-align:center;font-size:12.5px">OK</div></div></body></html>
